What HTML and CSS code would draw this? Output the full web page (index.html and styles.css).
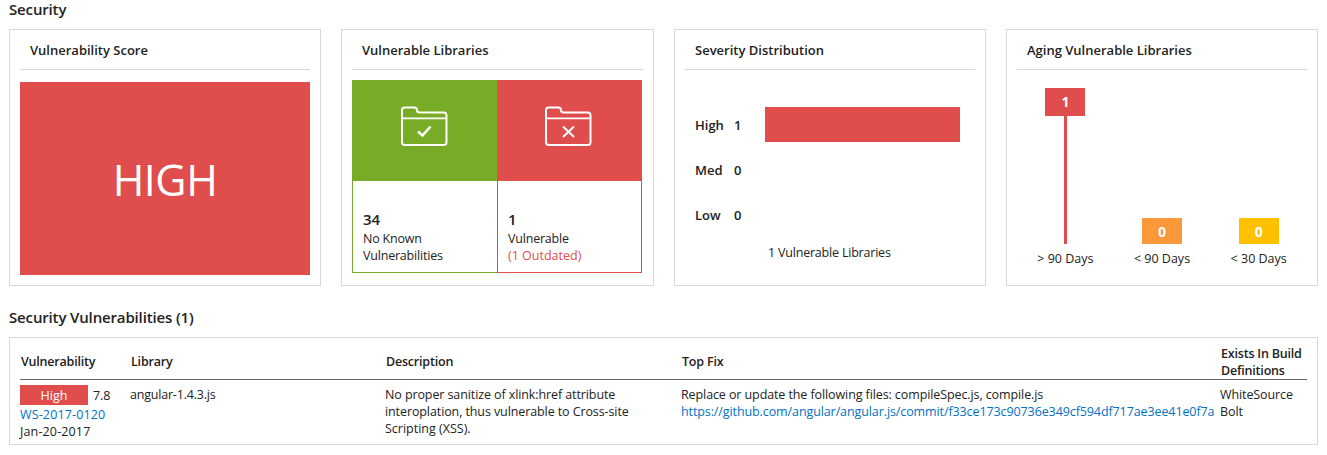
FILE: index.html
```html
<!DOCTYPE html>
<html lang="en">
<head>
<meta charset="utf-8">
<title>Security</title>
<link rel="stylesheet" href="styles.css">
</head>
<body>
<main class="page">
  <h2 class="section-title"><span class="t-security">Security</span></h2>
  <div class="cards">
    <section class="card">
      <h3 class="card-title"><span class="t-score">Vulnerability Score</span></h3>
      <div class="score"><span>HIGH</span></div>
    </section>
    <section class="card card-libs">
      <h3 class="card-title"><span class="t-libs">Vulnerable Libraries</span></h3>
      <div class="tiles">
        <div class="tile tile-ok">
          <div class="tile-icon">
            <svg width="48" height="41" viewBox="0 0 48 41" fill="none" stroke="#fff" stroke-width="2" stroke-linejoin="round">
              <path d="M2 36V4Q2 1.500 4.500 1.500H14.500Q17 1.500 17 4V4.500Q17 6.500 19.500 6.500H43.500Q46.500 6.500 46.500 9.500V36.500Q46.500 39 43.500 39H4.500Q2 39 2 36Z"/>
              <path d="M2 12.400H46.500" stroke-width="1.600"/>
              <path d="M18 25.500L22.500 29.500L30.500 20.500" stroke-width="2.600" stroke-linejoin="miter"/>
            </svg>
          </div>
          <div class="tile-body">
            <strong>34</strong>
            <span class="t-noknown">No Known</span>
            <span class="t-vulns">Vulnerabilities</span>
          </div>
        </div>
        <div class="tile tile-bad">
          <div class="tile-icon">
            <svg width="48" height="41" viewBox="0 0 48 41" fill="none" stroke="#fff" stroke-width="2" stroke-linejoin="round">
              <path d="M2 36V4Q2 1.500 4.500 1.500H14.500Q17 1.500 17 4V4.500Q17 6.500 19.500 6.500H43.500Q46.500 6.500 46.500 9.500V36.500Q46.500 39 43.500 39H4.500Q2 39 2 36Z"/>
              <path d="M2 12.400H46.500" stroke-width="1.600"/>
              <path d="M19 20.500L30 31M30 20.500L19 31"/>
            </svg>
          </div>
          <div class="tile-body">
            <strong>1</strong>
            <span class="t-vulnerable">Vulnerable</span>
            <span class="t-outdated">(1 Outdated)</span>
          </div>
        </div>
      </div>
    </section>
    <section class="card">
      <h3 class="card-title"><span class="t-sev">Severity Distribution</span></h3>
      <div class="severity">
        <div class="sev-row"><span>High</span><span>1</span><div class="bar"></div></div>
        <div class="sev-row"><span>Med</span><span>0</span></div>
        <div class="sev-row"><span>Low</span><span>0</span></div>
        <p class="sev-note"><span class="t-note">1 Vulnerable Libraries</span></p>
      </div>
    </section>
    <section class="card">
      <h3 class="card-title"><span class="t-aging">Aging Vulnerable Libraries</span></h3>
      <div class="aging">
        <div class="age"><div class="flag flag-high">1</div><div class="stem"></div><span class="age-label">&gt; 90 Days</span></div>
        <div class="age"><div class="flag flag-med">0</div><span class="age-label">&lt; 90 Days</span></div>
        <div class="age"><div class="flag flag-low">0</div><span class="age-label">&lt; 30 Days</span></div>
      </div>
    </section>
  </div>
  <h2 class="section-title section-vulns"><span class="t-secvulns">Security Vulnerabilities (1)</span></h2>
  <div class="table">
    <div class="row head">
      <div><span class="h-vuln">Vulnerability</span></div>
      <div><span class="h-lib">Library</span></div>
      <div><span class="h-desc">Description</span></div>
      <div><span class="h-fix">Top Fix</span></div>
      <div><span class="h-exists">Exists In Build<br>Definitions</span></div>
    </div>
    <div class="row body">
      <div>
        <div class="rating"><span class="pill">High</span><span>7.8</span></div>
        <a class="t-ws">WS-2017-0120</a><br>
        <span class="t-date">Jan-20-2017</span>
      </div>
      <div class="text"><span class="t-angular">angular-1.4.3.js</span></div>
      <div class="text"><span class="t-d1">No proper sanitize of xlink:href attribute</span><br><span class="t-d2">interoplation, thus vulnerable to Cross-site</span><br><span class="t-d3">Scripting (XSS).</span></div>
      <div class="text"><span class="t-f1">Replace or update the following files: compileSpec.js, compile.js</span><br><a class="t-f2">https://github.com/angular/angular.js/commit/f33ce173c90736e349cf594df717ae3ee41e0f7a</a></div>
      <div class="text"><span class="t-source">WhiteSource</span><br>Bolt</div>
    </div>
  </div>
</main>
</body>
</html>
```
FILE: styles.css
```css
* { box-sizing: border-box; }
body { margin: 0; background: #fff; color: #222; font: 12.5px/17px "Open Sans", "Noto Sans", sans-serif; letter-spacing: -0.2px; }
h2, h3, p { margin: 0; }
a { color: #0072c6; }
.page { width: 1327px; height: 455px; padding: 0 9px; overflow: hidden; white-space: nowrap; }
.section-title { height: 29px; font-size: 15px; line-height: 19px; font-weight: 600; letter-spacing: -0.15px; }
.section-vulns { height: 51px; padding-top: 22px; }
.cards { display: flex; justify-content: space-between; }
.card { width: 312px; height: 257px; border: 1px solid #d9d9d9; padding: 0 10px; }
.card-libs { width: 313px; }
.card-title { height: 40px; padding-left: 10px; border-bottom: 1px solid #d9d9d9; font-size: 13px; line-height: 41px; font-weight: 600; letter-spacing: 0; }
.score { height: 193px; margin-top: 12px; background: #df4d4d; color: #fff; display: flex; align-items: center; justify-content: center; font-size: 43px; letter-spacing: -0.5px; padding-top: 2px; }
.tiles { display: flex; width: 290px; height: 193px; margin-top: 10px; }
.tile { flex: 1; display: flex; flex-direction: column; }
.tile-icon { height: 101px; padding: 26px 0 0 48px; }
.tile-body { flex: 1; display: flex; flex-direction: column; padding: 28px 0 0 10px; border: 1px solid; border-top: 0; }
.tile-body span { color: #222; }
.tile-body strong { color: #222; font-size: 15px; line-height: 21px; font-weight: 600; letter-spacing: 0; }
.tile-ok .tile-icon { background: #78ab26; }
.tile-ok .tile-body { border-color: #78ab26; border-right: 0; }
.tile-bad .tile-icon { background: #df4d4d; padding-left: 47px; }
.tile-bad .tile-body { border-color: #df4d4d; padding-left: 10px; }
.tile-body .t-outdated { color: #df4d4d; letter-spacing: 0; }
.severity { padding: 37px 0 0 10px; }
.sev-row { display: grid; grid-template-columns: 39px 31px 195px; grid-template-rows: 35px; height: 35px; margin-bottom: 10px; line-height: 37px; font-size: 13px; font-weight: 600; letter-spacing: 0; }
.bar { background: #df4d4d; }
.sev-note { padding: 2px 0 0 73px; }
.aging { display: flex; padding-top: 18px; height: 200px; align-items: flex-end; }
.age { flex: 1; display: flex; flex-direction: column; align-items: center; }
.flag { width: 40px; height: 26px; color: #fff; text-align: center; font-size: 14px; line-height: 28px; font-weight: 700; }
.flag-high { height: 28px; background: #df4d4d; }
.flag-med { background: #f99939; }
.flag-low { background: #ffc000; }
.stem { width: 3px; height: 128px; background: #df4d4d; }
.age-label { height: 26px; padding-top: 6px; letter-spacing: 0; }
.table { height: 108px; border: 1px solid #d9d9d9; padding: 0 10px; }
.row { display: grid; grid-template-columns: 110px 255px 296px 539px 87px; }
.head { height: 42px; border-bottom: 1px solid #666; align-items: center; padding: 6px 0 0 1px; font-weight: 600; }
.body { padding-top: 5px; letter-spacing: -0.1px; }
.text { padding-top: 1px; }
.t-ws, .t-date { letter-spacing: 0.14px; }
.t-angular { letter-spacing: -0.2px; }
.t-d3 { letter-spacing: 0; }
.rating { display: flex; gap: 5px; height: 21px; line-height: 21px; }
.pill { width: 68px; height: 20px; background: #df4d4d; color: #fff; text-align: center; letter-spacing: 0.1px; }
```
